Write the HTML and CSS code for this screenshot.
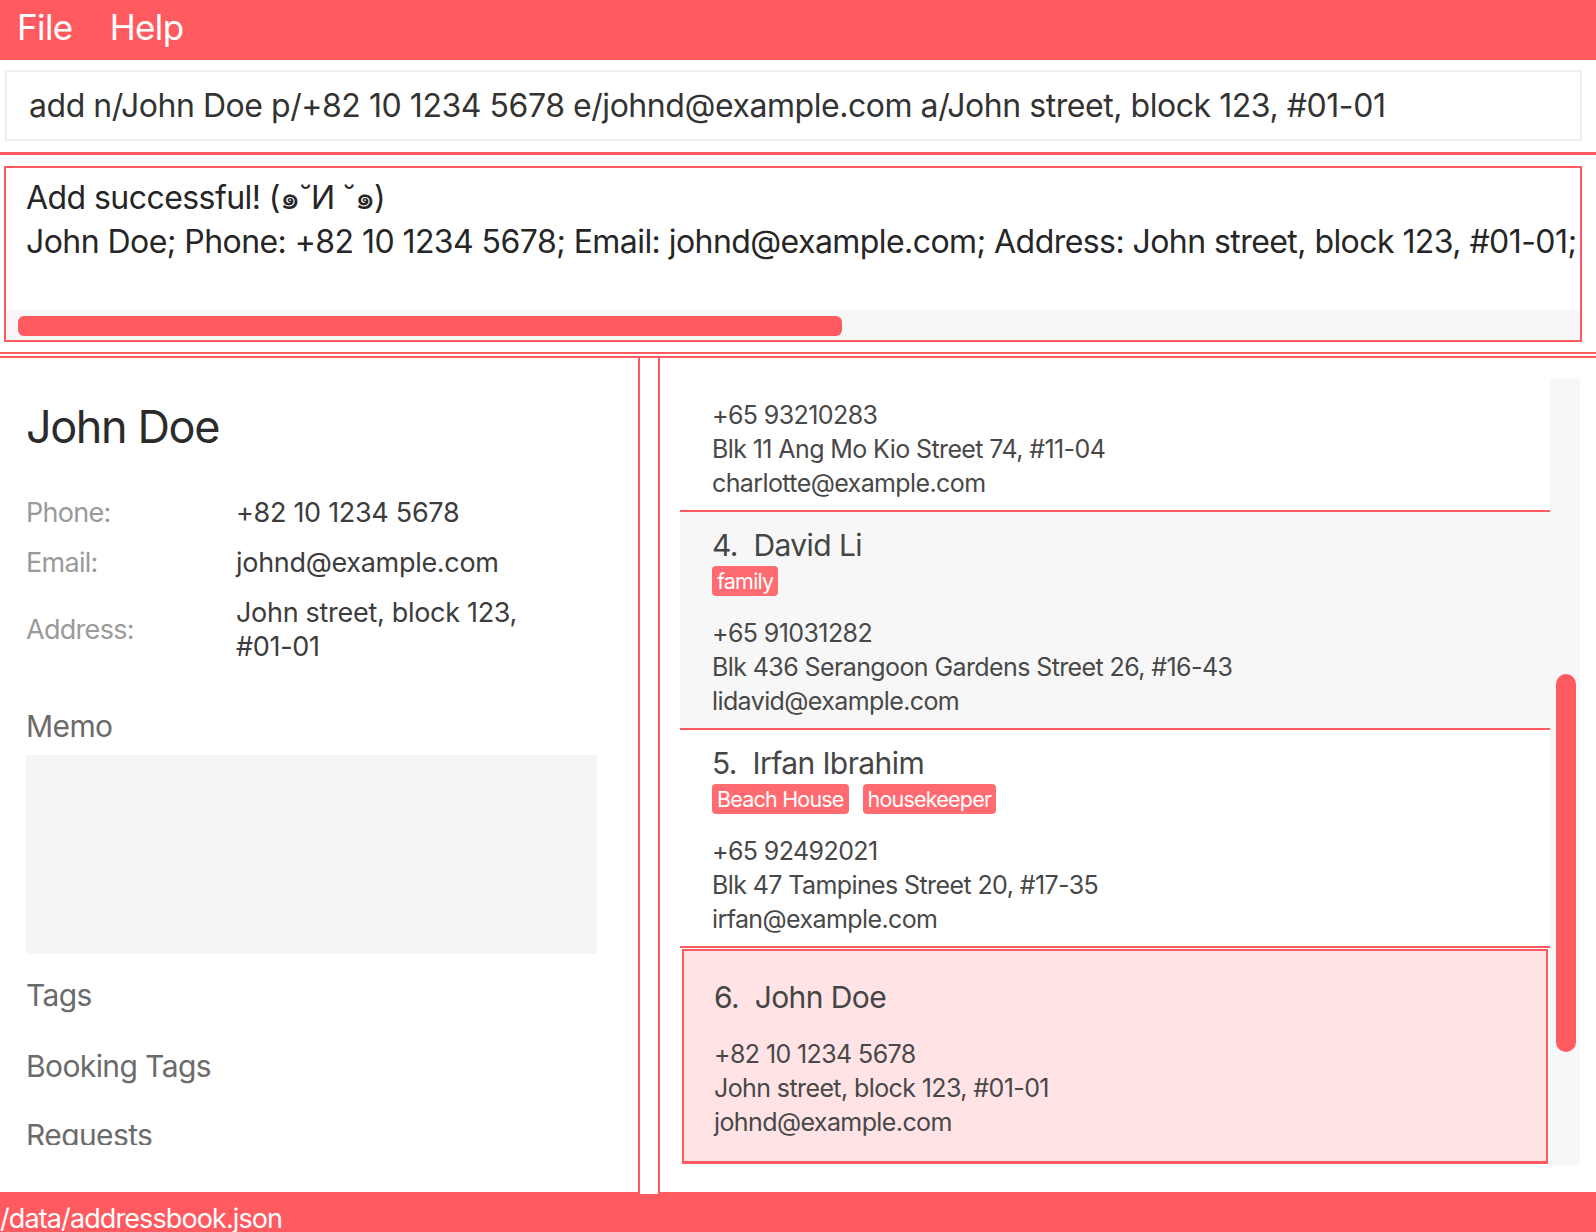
FILE: index.html
```html
<!DOCTYPE html>
<html>
<head>
<meta charset="utf-8">
<link rel="stylesheet" href="styles.css">
</head>
<body>
<div class="app">
  <div class="menubar">
    <span class="menu-item">File</span>
    <span class="menu-item">Help</span>
  </div>
  <div class="command-wrap">
    <div class="command-box">add n/John Doe p/+82 10 1234 5678 e/johnd@example.com a/John street, block 123, #01-01</div>
  </div>
  <div class="result-section">
    <div class="result-box">
      <div class="result-text">
        <div class="result-line">Add successful! (๑˘И ˘๑)</div>
        <div class="result-line">John Doe; Phone: +82 10 1234 5678; Email: johnd@example.com; Address: John street, block 123, #01-01;</div>
      </div>
      <div class="hscroll"><div class="hthumb"></div></div>
    </div>
  </div>
  <div class="panels">
    <div class="detail-panel">
      <div class="detail-scroll">
        <div class="detail-name">John Doe</div>
        <div class="detail-grid">
          <div class="label">Phone:</div><div class="value">+82 10 1234 5678</div>
          <div class="label">Email:</div><div class="value">johnd@example.com</div>
          <div class="label">Address:</div><div class="value">John street, block 123,<br>#01-01</div>
        </div>
        <div class="section-title memo-title">Memo</div>
        <div class="memo-box"></div>
        <div class="section-title tags-title">Tags</div>
        <div class="section-title booking-title">Booking Tags</div>
        <div class="section-title requests-title">Requests</div>
      </div>
    </div>
    <div class="list-panel">
      <div class="list-viewport">
        <div class="list">
          <div class="card card-white first-card">
            <div class="card-name">3.&nbsp; Charlotte Oliveiro</div>
            <div class="card-line first-line">+65 93210283</div>
            <div class="card-line">Blk 11 Ang Mo Kio Street 74, #11-04</div>
            <div class="card-line">charlotte@example.com</div>
          </div>
          <div class="card card-gray">
            <div class="card-name">4.&nbsp; David Li</div>
            <div class="tags"><span class="tag">family</span></div>
            <div class="card-line first-line">+65 91031282</div>
            <div class="card-line">Blk 436 Serangoon Gardens Street 26, #16-43</div>
            <div class="card-line">lidavid@example.com</div>
          </div>
          <div class="card card-white">
            <div class="card-name">5.&nbsp; Irfan Ibrahim</div>
            <div class="tags"><span class="tag">Beach House</span><span class="tag">housekeeper</span></div>
            <div class="card-line first-line">+65 92492021</div>
            <div class="card-line">Blk 47 Tampines Street 20, #17-35</div>
            <div class="card-line">irfan@example.com</div>
          </div>
          <div class="card card-selected">
            <div class="card-name">6.&nbsp; John Doe</div>
            <div class="card-line first-line">+82 10 1234 5678</div>
            <div class="card-line">John street, block 123, #01-01</div>
            <div class="card-line">johnd@example.com</div>
          </div>
        </div>
        <div class="vscroll"><div class="vthumb"></div></div>
      </div>
    </div>
  </div>
  <div class="statusbar">/data/addressbook.json</div>
</div>
</body>
</html>
```

FILE: styles.css
```css
html, body {
  margin: 0;
  padding: 0;
  background: #ffffff;
}
body {
  width: 1596px;
  height: 1232px;
  overflow: hidden;
  font-family: "Inter", "Noto Sans", "DejaVu Sans", sans-serif;
  color: #333333;
}
.app {
  display: flex;
  flex-direction: column;
  height: 1232px;
}
.menubar {
  height: 60px;
  flex: none;
  background: #ff5a5f;
  display: flex;
  align-items: center;
  padding-left: 17px;
  gap: 37px;
  color: #ffffff;
  font-size: 35px;
  letter-spacing: -0.6px;
}
.menu-item {
  line-height: 52px;
  margin-top: -6px;
}
.command-wrap {
  flex: none;
  padding: 10px 14px 11px 5px;
}
.command-box {
  height: 67px;
  border: 2px solid #efefef;
  box-sizing: content-box;
  padding-left: 22px;
  font-size: 32px;
  line-height: 68px;
  color: #333333;
  letter-spacing: -0.45px;
  white-space: nowrap;
}
.result-section {
  flex: none;
  border-top: 3px solid #ff5a5f;
  border-bottom: 2px solid #ff5a5f;
  padding: 11px 14px 10px 4px;
}
.result-box {
  border: 2px solid #ff5a5f;
  height: 172px;
  display: flex;
  flex-direction: column;
  justify-content: space-between;
}
.result-text {
  padding: 8px 0 0 20px;
  font-size: 32px;
  line-height: 44px;
  color: #262626;
  letter-spacing: -0.56px;
  white-space: nowrap;
  overflow: hidden;
}
.hscroll {
  height: 30px;
  background: #f7f7f7;
  padding: 6px 0 4px 12px;
  box-sizing: border-box;
}
.hthumb {
  width: 824px;
  height: 20px;
  background: #ff5a5f;
  border-radius: 6px;
}
.panels {
  flex: none;
  margin-top: 2px;
  border-top: 2px solid #ff5a5f;
  display: flex;
  height: 836px;
}
.detail-panel {
  width: 640px;
  flex: none;
  border-right: 2px solid #ff5a5f;
  border-bottom: 2px solid #ff5a5f;
  box-sizing: border-box;
  padding-bottom: 44px;
}
.detail-scroll {
  height: 787px;
  overflow: hidden;
  padding-left: 26px;
  padding-right: 40px;
  box-sizing: border-box;
}
.detail-name {
  margin-top: 39px;
  font-size: 45px;
  line-height: 60px;
  color: #2b2b2b;
  letter-spacing: -1.4px;
}
.detail-grid {
  margin-top: 39px;
  display: grid;
  grid-template-columns: 210px 1fr;
  row-gap: 16px;
  align-items: center;
  font-size: 27px;
  line-height: 34px;
}
.label {
  color: #9a9a9a;
  letter-spacing: -0.7px;
}
.value {
  color: #3c3c3c;
  letter-spacing: -0.3px;
}
.section-title {
  font-size: 30px;
  line-height: 34px;
  color: #6b6b6b;
  letter-spacing: -0.6px;
}
.memo-title {
  margin-top: 45px;
}
.memo-box {
  margin-top: 12px;
  width: 571px;
  height: 199px;
  background: #f5f5f5;
}
.tags-title {
  margin-top: 24px;
}
.booking-title {
  margin-top: 37px;
}
.requests-title {
  margin-top: 35px;
}
.list-panel {
  flex: 1;
  border-left: 2px solid #ff5a5f;
  border-bottom: 2px solid #ff5a5f;
  margin-left: 18px;
  box-sizing: border-box;
  padding: 20px 16px 0 20px;
}
.list-viewport {
  height: 787px;
  display: flex;
  overflow: hidden;
}
.list {
  flex: 1;
  margin-top: -53px;
}
.vscroll {
  width: 30px;
  flex: none;
  background: #f7f7f7;
  padding: 296px 0 0 6px;
  box-sizing: border-box;
}
.vthumb {
  width: 20px;
  height: 378px;
  background: #ff5a5f;
  border-radius: 10px;
}
.card {
  padding: 15px 0 10px 32px;
  border-bottom: 2px solid #ff5a5f;
  color: #484848;
}
.card-white {
  background: #ffffff;
}
.card-gray {
  background: #f7f7f7;
}
.card-selected {
  background: #ffe3e5;
  border: 2px solid #ff5a5f;
  border-bottom-width: 3px;
  margin: 1px 2px 0 2px;
  padding: 28px 0 22px 30px;
}
.card-name {
  font-size: 30px;
  line-height: 36px;
  letter-spacing: -0.6px;
  color: #454545;
}
.card-line {
  font-size: 25px;
  line-height: 34px;
  letter-spacing: -0.6px;
}
.first-line {
  margin-top: 22px;
}
.tags {
  margin-top: 3px;
  display: flex;
  gap: 14px;
  height: 30px;
  margin-bottom: -2px;
}
.tag {
  background: #ff6b70;
  color: #ffffff;
  font-size: 21.5px;
  line-height: 30px;
  padding: 0 5px;
  border-radius: 4px;
  letter-spacing: -0.8px;
}
.statusbar {
  flex: 1;
  background: #ff5a5f;
  color: #ffffff;
  font-size: 27px;
  line-height: 50px;
  letter-spacing: -0.9px;
  white-space: nowrap;
}
```
